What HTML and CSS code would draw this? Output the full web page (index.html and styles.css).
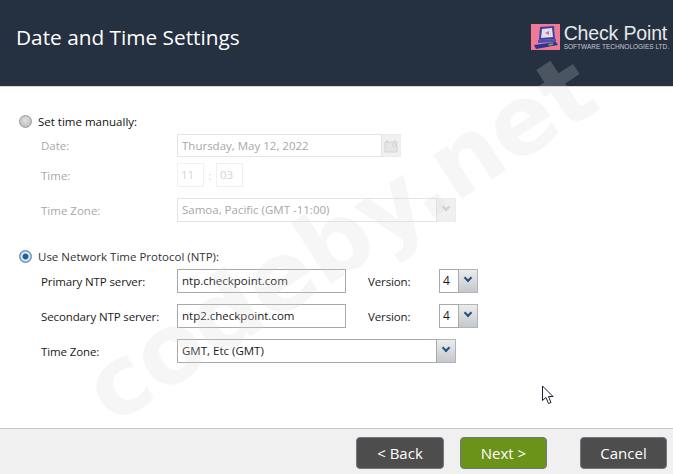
FILE: index.html
```html
<!DOCTYPE html>
<html lang="en">
<head>
    <meta charset="UTF-8">
    <meta name="viewport" content="width=device-width, initial-scale=1.0">
    <title>Date and Time Settings</title>
    <link rel="stylesheet" href="styles.css">
</head>
<body>
    <div class="wizard">
        <header class="wizard-header">
            <h1>Date and Time Settings</h1>
            <div class="logo">
                <svg class="logo-icon" width="29" height="26" viewBox="0 0 29 26">
                    <rect width="29" height="26" fill="#ee7a96"/>
                    <path d="M9 3 L23 2 L24 15 L8 16 Z" fill="#3c41a8"/>
                    <path d="M11 5 L21 4 L22 13 L10 14 Z" fill="#e4dfe6"/>
                    <path d="M14 9 L18 7 L18 11 Z" fill="#c9708c"/>
                    <path d="M7 16 L25 15 L25 18 L7 19 Z" fill="#4a50b8"/>
                    <path d="M3 21 L25 18 L27 21 L5 25 Z" fill="#2f3390"/>
                    <path d="M17 20 L22 19 L22 21 L18 22 Z" fill="#6f9a4a"/>
                </svg>
                <div class="logo-text">
                    <div class="logo-name">Check Point</div>
                    <div class="logo-sub">SOFTWARE TECHNOLOGIES LTD.</div>
                </div>
            </div>
        </header>

        <main class="wizard-body">
            <section class="group group-manual">
                <div class="radio-row">
                    <span class="radio"></span>
                    <span class="radio-label strong">Set time manually:</span>
                </div>
                <div class="row row-date disabled">
                    <label>Date:</label>
                    <div class="field date-field">Thursday, May 12, 2022</div>
                    <div class="side-btn date-btn">
                        <svg width="14" height="14" viewBox="0 0 14 14"><path d="M1 3 H13 V13 H1 Z M3 1 V4 M11 1 V4" fill="#e6e6e6" stroke="#d2d2d2"/><circle cx="10" cy="6" r="1.4" fill="#fff" stroke="#cfcfcf"/></svg>
                    </div>
                </div>
                <div class="row row-time disabled">
                    <label>Time:</label>
                    <div class="field time-field">11</div>
                    <span class="colon">:</span>
                    <div class="field time-field">03</div>
                </div>
                <div class="row row-zone disabled">
                    <label>Time Zone:</label>
                    <div class="field zone-field">Samoa, Pacific (GMT -11:00)</div>
                    <div class="side-btn"><span class="chevron"></span></div>
                </div>
            </section>

            <section class="group group-ntp">
                <div class="radio-row">
                    <span class="radio checked"></span>
                    <span class="radio-label">Use Network Time Protocol (NTP):</span>
                </div>
                <div class="row row-server">
                    <label>Primary NTP server:</label>
                    <div class="field server-field">ntp.checkpoint.com</div>
                    <span class="version-label">Version:</span>
                    <div class="field version-field">4</div>
                    <div class="side-btn"><span class="chevron"></span></div>
                </div>
                <div class="row row-server">
                    <label>Secondary NTP server:</label>
                    <div class="field server-field">ntp2.checkpoint.com</div>
                    <span class="version-label">Version:</span>
                    <div class="field version-field">4</div>
                    <div class="side-btn"><span class="chevron"></span></div>
                </div>
                <div class="row row-server">
                    <label>Time Zone:</label>
                    <div class="field zone-field">GMT, Etc (GMT)</div>
                    <div class="side-btn"><span class="chevron"></span></div>
                </div>
            </section>
        </main>

        <footer class="wizard-footer">
            <button class="btn btn-back">&lt; Back</button>
            <button class="btn btn-next">Next &gt;</button>
            <button class="btn btn-cancel">Cancel</button>
        </footer>

        <div class="watermark">codeby.net</div>
        <svg class="cursor" width="14" height="20" viewBox="0 0 14 20">
            <path d="M1.5 1 V15.5 L5 12.5 L7.5 18.5 L10 17.5 L7.5 11.5 L12 11.5 Z" fill="#fff" stroke="#1c1c2c" stroke-width="1"/>
        </svg>
    </div>
</body>
</html>
```

FILE: styles.css
```css
* {
    box-sizing: border-box;
}
body {
    margin: 0;
    font-family: "Open Sans", "Noto Sans", Arial, sans-serif;
    font-size: 11.5px;
    color: #1a1a1a;
    background: #fff;
}
.wizard {
    position: relative;
    width: 673px;
    height: 474px;
    overflow: hidden;
    display: flex;
    flex-direction: column;
}
.wizard-header {
    height: 87px;
    flex: none;
    display: flex;
    justify-content: space-between;
    align-items: center;
    padding: 0 4px 12px 16px;
    background: #253041;
    border-bottom: 1px solid #d8d8d8;
    color: #fff;
}
.wizard-header h1 {
    margin: 0;
    font-size: 20.8px;
    font-weight: 400;
    color: #fff;
}
.logo {
    display: flex;
    align-items: center;
    gap: 4px;
}
.logo-icon {
    display: block;
}
.logo-name {
    font-family: "Liberation Sans", Arial, sans-serif;
    font-size: 19.5px;
    line-height: 20px;
    letter-spacing: -0.15px;
    color: #e6e8ea;
}
.logo-sub {
    font-family: "Liberation Sans", Arial, sans-serif;
    font-size: 6.5px;
    line-height: 8px;
    color: #c5c9cf;
    white-space: nowrap;
}
.wizard-body {
    flex: 1;
    padding: 26px 0 0 19px;
}
.group-ntp {
    margin-top: 26px;
}
.radio-row {
    display: flex;
    align-items: center;
    gap: 6px;
    height: 16px;
}
.radio {
    width: 13px;
    height: 13px;
    border-radius: 50%;
    background: radial-gradient(circle at 50% 40%, #e2e2e2, #b4b4b4);
    border: 1px solid #9a9a9a;
}
.radio.checked {
    background: radial-gradient(circle, #1f5f9f 0 2.5px, #e8f0f6 3.5px 4px, #7fa6c6 5.5px);
    border-color: #5f8bb0;
}
.radio-label {
    color: #333;
}
.radio-label.strong {
    color: #111;
}
.row {
    display: flex;
    align-items: center;
    height: 24px;
    padding-left: 22px;
}
.row label {
    width: 136px;
    flex: none;
}
.row-server label,
.version-label {
    letter-spacing: -0.12px;
}
.field {
    height: 24px;
    line-height: 22px;
    padding: 0 4px;
    background: #fff;
    border: 1px solid #a9a9a9;
    white-space: nowrap;
}
.side-btn {
    height: 24px;
    width: 19px;
    flex: none;
    display: flex;
    align-items: center;
    justify-content: center;
    background: linear-gradient(#ececec, #c4c8cc);
    border: 1px solid #b4b4b4;
    border-left: none;
}
.chevron {
    width: 6px;
    height: 6px;
    margin-top: -6px;
    border-right: 2px solid #28507f;
    border-bottom: 2px solid #28507f;
    transform: rotate(45deg);
}
.row-date {
    margin-top: 5px;
    height: 23px;
}
.row-time {
    margin-top: 6px;
}
.row-zone {
    margin-top: 11px;
}
.date-field {
    width: 205px;
    height: 23px;
}
.date-btn {
    height: 23px;
}
.time-field {
    width: 27px;
    padding: 0 3px;
}
.colon {
    width: 12px;
    text-align: center;
}
.zone-field {
    width: 260px;
}
.server-field {
    width: 169px;
}
.version-label {
    width: 93px;
    padding-left: 22px;
    flex: none;
    white-space: nowrap;
}
.version-field {
    width: 20px;
    padding: 0 3px;
    font-size: 12px;
}
.row-server {
    margin-top: 11px;
}
.group-ntp .radio-row + .row-server {
    margin-top: 5px;
}
.disabled,
.disabled .field {
    color: #a8a8a8;
}
.disabled .field {
    border-color: #e4e4e4;
}
.disabled .time-field {
    color: #d4d4d4;
    border-color: #f0f0f0;
}
.disabled .colon {
    color: #d4d4d4;
}
.disabled .side-btn {
    background: #f0f0f0;
    border-color: #ececec;
}
.disabled .chevron {
    border-color: #d0d0d0;
}
.wizard-footer {
    height: 46px;
    flex: none;
    display: flex;
    align-items: center;
    padding: 0 6px 0 356px;
    background: #f0f0f0;
    border-top: 1px solid #c8c8c8;
}
.btn {
    width: 87px;
    height: 32px;
    padding: 0;
    font-family: inherit;
    font-size: 15px;
    color: #fff;
    background: #4d4d4d;
    border: 1px solid #6e7884;
    border-radius: 4px;
    margin-top: 3px;
}
.btn-back {
    width: 88px;
}
.btn-next {
    margin-left: 16px;
    background: #6b9219;
}
.btn-cancel {
    margin-left: 33px;
}
.watermark {
    position: absolute;
    left: 47px;
    top: 184px;
    font-family: "DejaVu Sans", Arial, sans-serif;
    font-size: 96px;
    line-height: 110px;
    font-weight: 700;
    letter-spacing: -1px;
    color: rgba(216, 216, 216, 0.22);
    white-space: nowrap;
    transform: rotate(-33deg);
    pointer-events: none;
}
.cursor {
    position: absolute;
    left: 541px;
    top: 385px;
}
```
